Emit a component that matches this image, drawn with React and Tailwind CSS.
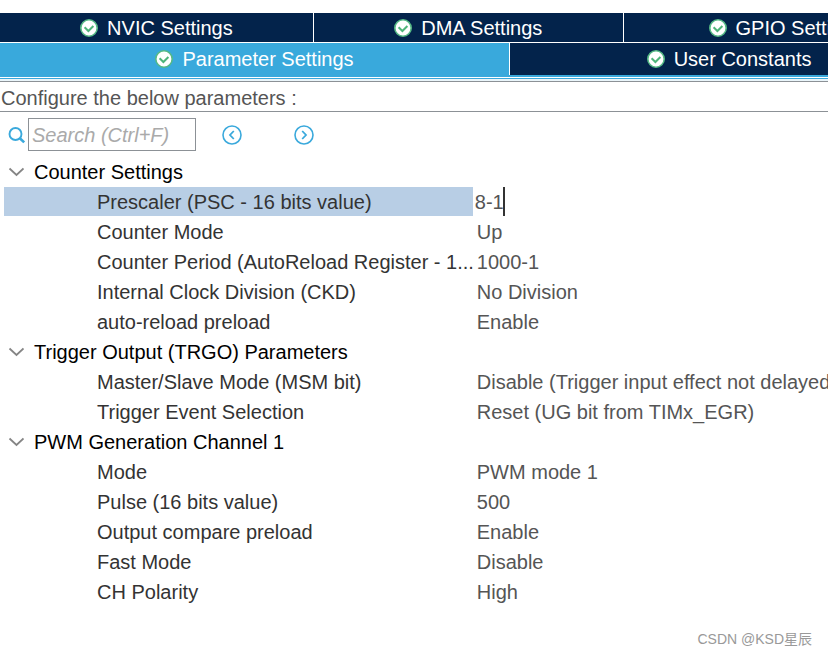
import { useState } from "react";

const TOP_TABS = [
  { label: "NVIC Settings", width: "w-[33.1%]" },
  { label: "DMA Settings", width: "w-[32.7%]" },
  { label: "GPIO Settings", width: "flex-1" },
];

const GROUPS = [
  {
    title: "Counter Settings",
    rows: [
      { name: "Prescaler (PSC - 16 bits value)", value: "8-1", editing: true },
      { name: "Counter Mode", value: "Up" },
      { name: "Counter Period (AutoReload Register - 1...", value: "1000-1" },
      { name: "Internal Clock Division (CKD)", value: "No Division" },
      { name: "auto-reload preload", value: "Enable" },
    ],
  },
  {
    title: "Trigger Output (TRGO) Parameters",
    rows: [
      { name: "Master/Slave Mode (MSM bit)", value: "Disable (Trigger input effect not delayed" },
      { name: "Trigger Event Selection", value: "Reset (UG bit from TIMx_EGR)" },
    ],
  },
  {
    title: "PWM Generation Channel 1",
    rows: [
      { name: "Mode", value: "PWM mode 1" },
      { name: "Pulse (16 bits value)", value: "500" },
      { name: "Output compare preload", value: "Enable" },
      { name: "Fast Mode", value: "Disable" },
      { name: "CH Polarity", value: "High" },
    ],
  },
];

function CheckBadge() {
  return (
    <svg viewBox="0 0 18 18" className="h-[18px] w-[18px] shrink-0" aria-hidden="true">
      <circle cx="9" cy="9" r="8.2" fill="#fff" stroke="#55b985" strokeWidth="1.6" />
      <path d="M4.6 8.2L8.4 12l5-5" fill="none" stroke="#4fb57a" strokeWidth="2" />
    </svg>
  );
}

function SearchIcon() {
  return (
    <svg viewBox="0 0 18 18" className="h-[18px] w-[18px] shrink-0" fill="none" stroke="#3aa9dc" aria-hidden="true">
      <circle cx="7.5" cy="8" r="6" strokeWidth="1.9" />
      <path d="M11.8 12.2l4.4 4.2" strokeWidth="2.6" />
    </svg>
  );
}

function ArrowIcon({ d }) {
  return (
    <svg viewBox="0 0 20 20" className="h-5 w-5" fill="none" stroke="#3aa9dc" aria-hidden="true">
      <circle cx="10" cy="10" r="9" strokeWidth="1.6" />
      <path d={d} strokeWidth="1.8" />
    </svg>
  );
}

function Chevron({ open }) {
  return (
    <svg
      viewBox="0 0 16 10"
      className={open ? "h-[10px] w-4" : "h-[10px] w-4 -rotate-90"}
      fill="none"
      stroke="#858585"
      strokeWidth="1.8"
      aria-hidden="true"
    >
      <path d="M1.5 1.5L8.5 8l7-6.5" />
    </svg>
  );
}

function Tab({ label, className, selected }) {
  return (
    <button
      type="button"
      role="tab"
      aria-selected={selected}
      className={`flex items-center justify-center gap-[9px] whitespace-nowrap text-white ${className}`}
    >
      <CheckBadge />
      {label}
    </button>
  );
}

function ParameterRow({ row }) {
  const [value, setValue] = useState(row.value);

  return (
    <tr className="h-[30px]">
      <th scope="row" className="p-0 pb-px pl-1 text-left font-normal text-[#333]">
        <div className={`h-[29px] whitespace-nowrap pl-[93px] leading-[30px] ${row.editing ? "bg-[#b8cee5]" : ""}`}>
          {row.name}
        </div>
      </th>
      <td className="whitespace-nowrap p-0 pb-px text-[#555]">
        {row.editing ? (
          <input
            aria-label={row.name}
            value={value}
            onChange={(e) => setValue(e.target.value)}
            className="ml-[2px] block h-[29px] w-[30px] border-r-2 border-[#333] outline-none"
          />
        ) : (
          <div className="h-[29px] pl-1 leading-[30px]">{row.value}</div>
        )}
      </td>
    </tr>
  );
}

function ParameterGroup({ group }) {
  const [open, setOpen] = useState(true);

  return (
    <tbody>
      <tr className="h-[30px]">
        <th colSpan={2} scope="rowgroup" className="p-0 text-left font-normal text-black">
          <button
            type="button"
            aria-expanded={open}
            onClick={() => setOpen(!open)}
            className="flex h-[30px] items-center gap-[10px] pl-2"
          >
            <Chevron open={open} />
            {group.title}
          </button>
        </th>
      </tr>
      {open && group.rows.map((row) => <ParameterRow key={row.name} row={row} />)}
    </tbody>
  );
}

export default function App() {
  const [query, setQuery] = useState("");

  return (
    <main className="flex min-h-screen flex-col overflow-hidden bg-white pt-[13px] font-['Liberation_Sans',Arial,sans-serif] text-[20px] leading-[30px]">
      <div role="tablist" className="w-[114.5%]">
        <div className="flex h-[30px] divide-x divide-white border-b border-white bg-[#03234b]">
          {TOP_TABS.map((tab) => (
            <Tab key={tab.label} label={tab.label} selected={false} className={tab.width} />
          ))}
        </div>
        <div className="flex h-8 bg-[#03234b]">
          <Tab label="Parameter Settings" selected className="w-[53.8%] border-r border-white bg-[#39a9dc]" />
          <Tab label="User Constants" selected={false} className="flex-1" />
        </div>
      </div>
      <div className="h-[2px] bg-[#39a9dc]" />
      <div className="mt-px h-px bg-[#39a9dc]" />
      <div className="h-[2px] bg-[#eaf5fa]" />

      <p className="h-[31px] border-y border-[#8c9196] pl-px leading-[32px] text-[#555]">
        Configure the below parameters :
      </p>

      <div className="flex h-[45px] items-center pl-2">
        <label htmlFor="search" aria-label="Search">
          <SearchIcon />
        </label>
        <input
          id="search"
          type="text"
          placeholder="Search (Ctrl+F)"
          value={query}
          onChange={(e) => setQuery(e.target.value)}
          className="ml-[2px] h-[33px] w-[168px] border border-[#8c9196] px-[3px] pt-[2px] text-[#555] outline-none placeholder:italic placeholder:text-[#aaa]"
        />
        <button type="button" aria-label="Previous match" className="ml-[26px]">
          <ArrowIcon d="M11.8 6L8 10l3.8 4" />
        </button>
        <button type="button" aria-label="Next match" className="ml-[52px]">
          <ArrowIcon d="M8.2 6l3.8 4-3.8 4" />
        </button>
      </div>

      <table className="w-full table-fixed border-collapse">
        <colgroup>
          <col className="w-[57.1%]" />
          <col />
        </colgroup>
        {GROUPS.map((group) => (
          <ParameterGroup key={group.title} group={group} />
        ))}
      </table>

      <footer className="mt-auto pb-1 pr-4 text-right font-['Liberation_Sans','Noto_Sans_CJK_SC',sans-serif] text-[14px] leading-6 text-[#999]">
        CSDN @KSD星辰
      </footer>
    </main>
  );
}
